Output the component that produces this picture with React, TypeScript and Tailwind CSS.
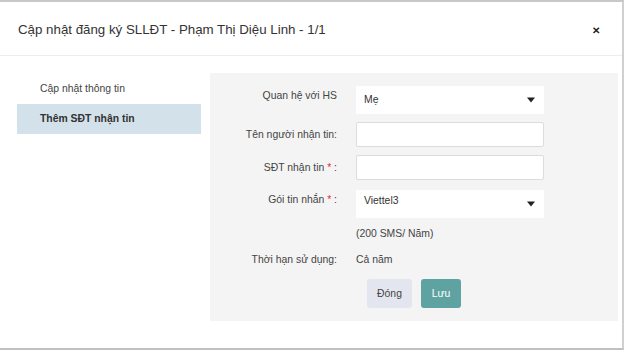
import React from "react";

const font = { fontFamily: '"Liberation Sans", Arial, sans-serif' };

function Caret() {
  return (
    <svg width="8" height="6" viewBox="0 0 8 6" className="mr-[3px]">
      <path d="M0 0.5 L8 0.5 L4 5.5 Z" fill="#222" />
    </svg>
  );
}

export default function App() {
  return (
    <div
      className="w-[624px] h-[350px] bg-white overflow-hidden border-t-[2px] border-t-[#c8c8c8] border-r-[2px] border-r-[#d0d0d0] border-b-[2px] border-b-[#c0c0c0] flex flex-col"
      style={font}
    >
      <div className="h-[54px] flex items-center justify-between pl-[18px] pr-[22px] border-b border-[#ececec] shrink-0">
        <div className="text-[13.3px] text-[#333] pt-[3px]">
          Cập nhật đăng ký SLLĐT - Phạm Thị Diệu Linh - 1/1
        </div>
        <div className="text-[10px] font-bold text-[#222] pt-[3px]">✕</div>
      </div>
      <div className="flex pt-[17px] pl-[17px]">
        <div className="w-[184px] pt-[2px] shrink-0">
          <div className="h-[28px] flex items-center pl-[23px] text-[10.4px] text-[#444]">
            Cập nhật thông tin
          </div>
          <div className="h-[30px] mt-[1px] flex items-center pl-[23px] text-[10.4px] font-bold text-[#333] bg-[#d3e2ea]">
            Thêm SĐT nhận tin
          </div>
        </div>
        <div className="ml-[9px] w-[408px] h-[248px] bg-[#f4f4f4] pt-[13px] text-[10.4px] text-[#444]">
          <div className="flex items-center h-[28px]">
            <div className="w-[127px] text-right pb-[8px]">Quan hệ với HS</div>
            <div className="ml-[19px] w-[188px] h-[28px] bg-white flex items-center justify-between pl-[8px] pr-[6px] text-[#333]">
              <span>Mẹ</span>
              <Caret />
            </div>
          </div>
          <div className="flex items-center h-[25px] mt-[8px]">
            <div className="w-[127px] text-right">Tên người nhận tin:</div>
            <div className="ml-[19px] w-[188px] h-[25px] bg-white border border-[#dcdcdc] rounded-[2px]" />
          </div>
          <div className="flex items-center h-[25px] mt-[8px]">
            <div className="w-[127px] text-right">
              SĐT nhận tin <span className="text-[#e03030]">*</span> :
            </div>
            <div className="ml-[19px] w-[188px] h-[25px] bg-white border border-[#dcdcdc] rounded-[2px]" />
          </div>
          <div className="flex items-center h-[28px] mt-[10px]">
            <div className="w-[127px] text-right pb-[8px]">
              Gói tin nhắn <span className="text-[#e03030]">*</span> :
            </div>
            <div className="ml-[19px] w-[188px] h-[28px] bg-white flex items-center justify-between pl-[8px] pr-[6px] text-[#333]">
              <span className="pb-[6px]">Viettel3</span>
              <Caret />
            </div>
          </div>
          <div className="flex items-center h-[14px] mt-[9px]">
            <div className="w-[127px]" />
            <div className="ml-[19px]">(200 SMS/ Năm)</div>
          </div>
          <div className="flex items-center h-[14px] mt-[12px]">
            <div className="w-[127px] text-right">Thời hạn sử dụng:</div>
            <div className="ml-[19px]">Cả năm</div>
          </div>
          <div className="flex h-[29px] mt-[12px] pl-[157px] gap-[9px]">
            <div className="w-[45px] h-[29px] bg-[#e4e6ef] rounded-[3px] flex items-center justify-center text-[10.4px] text-[#444]">
              Đóng
            </div>
            <div className="w-[40px] h-[29px] bg-[#5ea2a1] rounded-[3px] flex items-center justify-center text-[10.4px] text-white">
              Lưu
            </div>
          </div>
        </div>
      </div>
    </div>
  );
}
